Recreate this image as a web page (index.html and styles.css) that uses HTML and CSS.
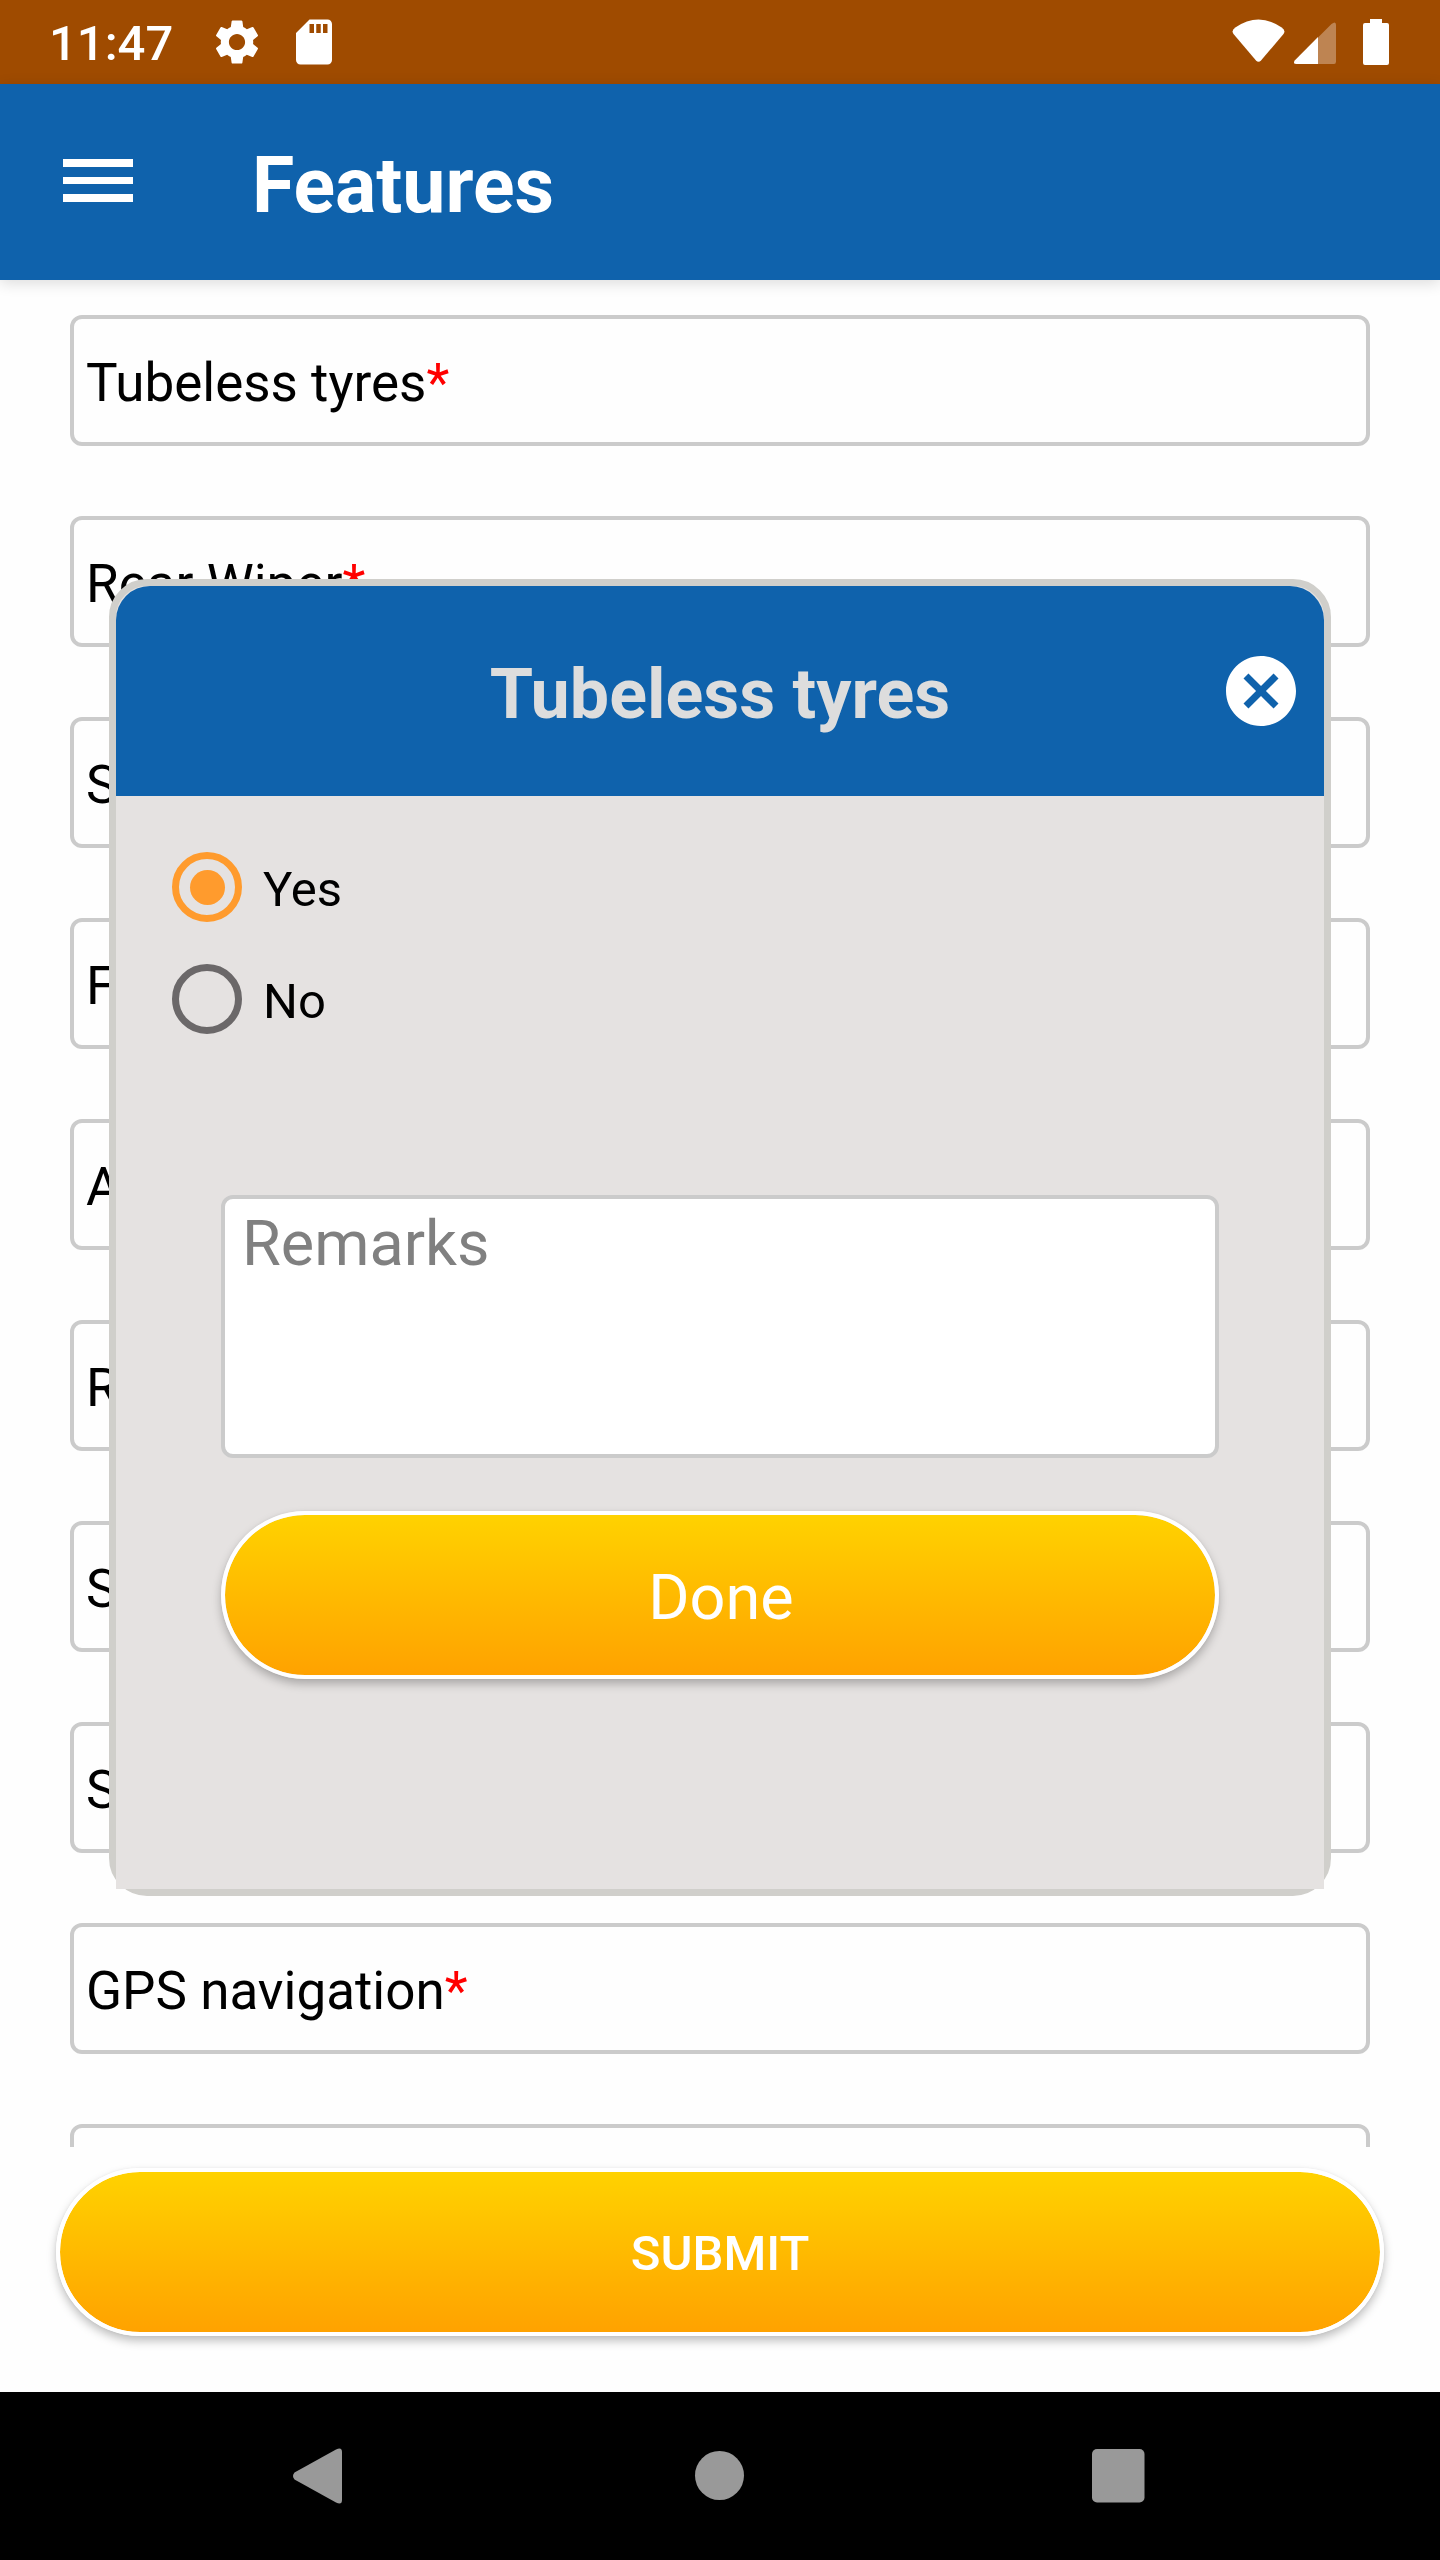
FILE: index.html
```html
<!DOCTYPE html>
<html lang="en">
<head>
<meta charset="utf-8">
<title>Features</title>
<link rel="stylesheet" href="styles.css">
</head>
<body>
<div class="screen">
  <header class="status">
    <span class="clock">11:47</span>
    <svg class="gear" viewBox="0 0 24 24"><path d="M19.14 12.94c.04-.3.06-.61.06-.94 0-.32-.02-.64-.07-.94l2.03-1.58c.18-.14.23-.41.12-.61l-1.92-3.32c-.12-.22-.37-.29-.59-.22l-2.39.96c-.5-.38-1.03-.7-1.62-.94l-.36-2.54c-.04-.24-.24-.41-.48-.41h-3.84c-.24 0-.43.17-.47.41l-.36 2.54c-.59.24-1.13.57-1.62.94l-2.39-.96c-.22-.08-.47 0-.59.22L2.74 8.87c-.12.21-.08.47.12.61l2.03 1.58c-.05.3-.09.63-.09.94s.02.64.07.94l-2.03 1.58c-.18.14-.23.41-.12.61l1.92 3.32c.12.22.37.29.59.22l2.39-.96c.5.38 1.03.7 1.62.94l.36 2.54c.05.24.24.41.48.41h3.84c.24 0 .44-.17.47-.41l.36-2.54c.59-.24 1.13-.56 1.62-.94l2.39.96c.22.08.47 0 .59-.22l1.92-3.32c.12-.22.07-.47-.12-.61l-2.01-1.58zM12 15.6c-1.98 0-3.6-1.62-3.6-3.6s1.62-3.6 3.6-3.6 3.6 1.62 3.6 3.6-1.62 3.6-3.6 3.6z"/></svg>
    <svg class="sd" viewBox="0 0 24 24"><path d="M18 2h-8L4 8v12c0 1.1.9 2 2 2h12c1.100 0 2-.9 2-2V4c0-1.100-.9-2-2-2zm-6 6h-2V4h2v4zm3 0h-2V4h2v4zm3 0h-2V4h2v4z"/></svg>
    <svg class="signals" viewBox="0 0 160 50"><path d="M3.300 8.500Q26.500-7.500 49.700 8.500Q54 11.500 51.500 15L29 41.500Q26.500 44 24 41.500L1.500 15Q-1 11.500 3.300 8.500Z"/><path opacity=".32" d="M86 18.600L99.500 5Q104 1.500 104 6V42.500Q104 45 102 45H86Z"/><path d="M86 18V45H64.500Q60.500 45 62.700 41.500Z"/><path d="M138 0h12v4h5q2 0 2 2v38q0 2-2 2h-22q-2 0-2-2V6q0-2 2-2h5z"/></svg>
  </header>
  <div class="appbar">
    <div class="menu"><i></i><i></i><i></i></div>
    <h1>Features</h1>
  </div>
  <main class="list">
    <div class="field">Tubeless tyres<b>*</b></div>
    <div class="field">Rear Wiper<b>*</b></div>
    <div class="field">S</div>
    <div class="field">F</div>
    <div class="field">A</div>
    <div class="field">R</div>
    <div class="field">S</div>
    <div class="field">S</div>
    <div class="field">GPS navigation<b>*</b></div>
    <div class="field"></div>
  </main>
  <div class="footer"><button class="pill submit">SUBMIT</button></div>
  <nav class="nav">
    <svg viewBox="0 0 1440 168"><path d="M294.500 80.500L336 57.500Q342 54.500 342 60V108Q342 113.500 336 110.500L294.500 87.500Q291.500 84 294.500 80.500Z"/><circle cx="719.500" cy="83.500" r="24.500"/><rect x="1092" y="57" width="52.500" height="53.500" rx="5"/></svg>
  </nav>

  <section class="dialog">
    <div class="dialog-head">
      <h2>Tubeless tyres</h2>
      <svg class="close" viewBox="0 0 24 24"><path d="M12 2C6.470 2 2 6.470 2 12s4.470 10 10 10 10-4.470 10-10S17.530 2 12 2zm5 13.590L15.590 17 12 13.410 8.410 17 7 15.590 10.590 12 7 8.410 8.410 7 12 10.590 15.590 7 17 8.410 13.410 12 17 15.590z"/></svg>
    </div>
    <div class="dialog-body">
      <div class="option"><span class="radio on"></span><span class="label">Yes</span></div>
      <div class="option"><span class="radio"></span><span class="label">No</span></div>
      <div class="remarks">Remarks</div>
      <button class="pill done">Done</button>
    </div>
  </section>
</div>
</body>
</html>
```
FILE: styles.css
```css
* { box-sizing: border-box; }
body { margin: 0; font-family: Roboto, "Liberation Sans", sans-serif; background: #fefefe; }
.screen { position: relative; width: 1440px; height: 2560px; display: flex; flex-direction: column; overflow: hidden; }

.status { height: 84px; flex: none; background: #9f4b00; display: flex; align-items: flex-start; color: #fff; }
.status svg { fill: #fff; flex: none; }
.clock { width: 161px; margin-left: 49px; font-size: 49px; font-weight: 500; line-height: 58px; padding-top: 15px; }
.gear { width: 54px; height: 54px; margin-top: 15px; }
.sd { width: 54px; height: 54px; margin: 15px 0 0 23px; }
.signals { width: 160px; height: 50px; margin: 19px 48px 0 auto; }

.appbar { height: 196px; flex: none; background: #0f62ac; display: flex; z-index: 1; box-shadow: 0 3px 14px rgba(0,0,0,.14); }
.menu { width: 70px; margin: 75px 0 0 63px; display: flex; flex-direction: column; gap: 10px; }
.menu i { height: 7.500px; background: #fff; }
h1 { margin: 57px 0 0 119px; font-size: 77px; line-height: 90px; font-weight: 700; color: #fff; }

.list { height: 1867px; flex: none; overflow: hidden; padding: 35px 70px 0; display: flex; flex-direction: column; gap: 70px; }
.field { height: 131px; flex: none; border: 4px solid #cbcbcb; border-radius: 12px; padding: 33px 0 0 12px; font-size: 53px; line-height: 62px; color: #000; }
.field b { font-weight: 400; color: #f00; }

.footer { height: 245px; flex: none; padding: 21px 56px 0; }
.pill { display: block; width: 100%; height: 168px; border: 4px solid #fff; border-radius: 84px; background: linear-gradient(#ffd200, #ffa200) padding-box; box-shadow: 0 5px 10px rgba(0,0,0,.25), 0 0 3px rgba(0,0,0,.05); color: #fff; font-family: inherit; padding: 0; }
.submit { font-size: 49px; font-weight: 500; padding-top: 3px; }
.done { font-size: 63px; margin-top: 53px; padding: 4px 0 0 2px; }

.nav { flex: none; height: 168px; background: #000; }
.nav svg { display: block; width: 1440px; height: 168px; fill: #999; }

.dialog { position: absolute; z-index: 2; left: 109px; top: 579px; width: 1222px; height: 1317px; border: 7px solid #d0cfcb; border-radius: 38px; background: #e5e2e1; }
.dialog-head { height: 210px; background: #0f62ac; border-radius: 34px 34px 0 0; display: grid; grid-template-columns: 105px 1fr 105px; align-items: center; }
h2 { grid-column: 2; margin: 5px 0 0; text-align: center; font-size: 70px; line-height: 82px; font-weight: 700; color: #ddd; }
.close { width: 84px; height: 84px; fill: #fff; }
.dialog-body { height: 1093px; background: #e5e2e1; padding: 56px 105px 0; }
.option { height: 70px; margin: 0 0 42px -49px; display: flex; align-items: center; gap: 21px; font-size: 49px; line-height: 58px; }
.label { padding-top: 5px; }
.radio { width: 70px; height: 70px; border: 7px solid #6b6869; border-radius: 50%; display: grid; place-items: center; }
.radio.on { border-color: #ff9b2d; }
.radio.on::before { content: ""; width: 35px; height: 35px; border-radius: 50%; background: #ff9b2d; }
.remarks { height: 263px; margin-top: 161px; border: 4px solid #cbcbcb; border-radius: 12px; background: #fff; padding: 8px 0 0 17px; font-size: 63px; line-height: 74px; color: #808080; }
```
